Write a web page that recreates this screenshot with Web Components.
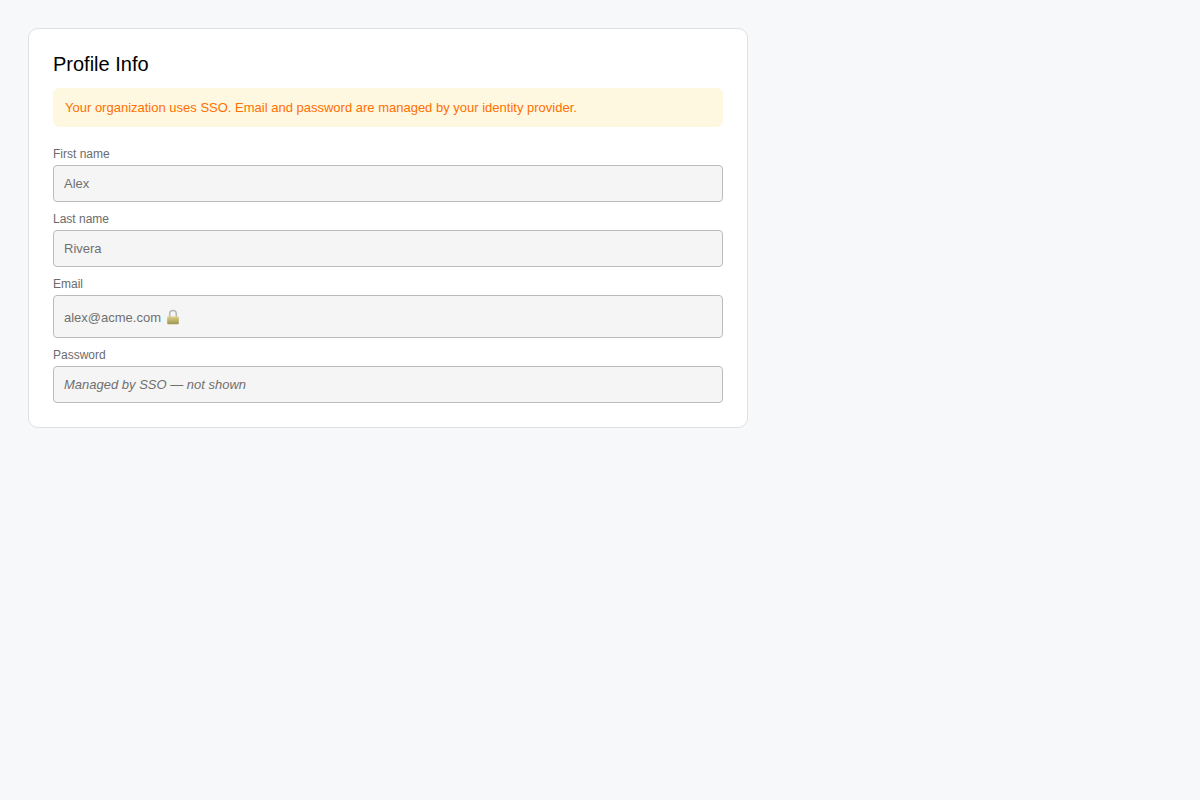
<!DOCTYPE html>
<html>
<head>
<meta charset="utf-8">
<title>Profile Info</title>
<style>
  html, body {
    margin: 0;
    height: 100%;
    background: #f7f8fa;
    font-family: "Liberation Sans", Arial, sans-serif;
  }
  body {
    padding: 28px;
    box-sizing: border-box;
  }
</style>
</head>
<body>
<template id="profile-card">
  <style>
    :host {
      display: block;
      box-sizing: border-box;
      width: 720px;
      padding: 24px;
      background: #fff;
      border: 1px solid #e0e0e0;
      border-radius: 10px;
    }
    h2 {
      margin: 0 0 12px;
      font-size: 20px;
      font-weight: 400;
      line-height: 23px;
      color: #000;
    }
    .fields {
      display: flex;
      flex-direction: column;
      gap: 10px;
    }
  </style>
  <h2 id="title"></h2>
  <slot name="notice"></slot>
  <div class="fields"><slot></slot></div>
</template>

<template id="sso-notice">
  <style>
    :host {
      display: block;
      margin-bottom: 20px;
      padding: 12px;
      background: #fff8e1;
      border-radius: 6px;
      color: #ff6f00;
      font-size: 13px;
      line-height: 15px;
    }
  </style>
  <slot></slot>
</template>

<template id="form-field">
  <style>
    :host {
      display: flex;
      flex-direction: column;
      gap: 4px;
    }
    label {
      font-size: 12px;
      line-height: 14px;
      color: #6b6b6b;
    }
    .value {
      display: flex;
      align-items: center;
      gap: 5px;
      padding: 10px;
      background: #f5f5f5;
      border: 1px solid #bbb;
      border-radius: 4px;
      font-size: 13px;
      line-height: 15px;
      color: #707070;
    }
    :host([muted]) .value {
      font-style: italic;
    }
    ::slotted(svg) {
      display: block;
    }
    ::slotted(span) {
      padding-top: 2px;
    }
  </style>
  <label id="label"></label>
  <div class="value"><slot></slot></div>
</template>

<profile-card heading="Profile Info">
  <sso-notice slot="notice">Your organization uses SSO. Email and password are managed by your identity provider.</sso-notice>
  <form-field label="First name">Alex</form-field>
  <form-field label="Last name">Rivera</form-field>
  <form-field label="Email"><span>alex@acme.com</span>
    <svg width="14" height="21" viewBox="0 0 14 21" aria-hidden="true">
      <defs>
        <linearGradient id="lock-body" x1="0" y1="0" x2="0" y2="1">
          <stop offset="0" stop-color="#e0d28a"/>
          <stop offset="1" stop-color="#9c9350"/>
        </linearGradient>
      </defs>
      <path d="M3.7 11V7.9a3.3 3.3 0 0 1 6.6 0V11" fill="none" stroke="#b4b7b8" stroke-width="1.5"/>
      <rect x="1.2" y="10.4" width="11.6" height="7.9" rx="1" fill="url(#lock-body)"/>
    </svg>
  </form-field>
  <form-field label="Password" muted>Managed by SSO — not shown</form-field>
</profile-card>

<script>
class ProfileCard extends HTMLElement {
  constructor() {
    super();
    const shadowRoot = this.attachShadow({ mode: 'open' });
    shadowRoot.appendChild(document.querySelector('template#profile-card').content.cloneNode(true));
    shadowRoot.querySelector('#title').textContent = this.getAttribute('heading');
  }
}

class SsoNotice extends HTMLElement {
  constructor() {
    super();
    const shadowRoot = this.attachShadow({ mode: 'open' });
    shadowRoot.appendChild(document.querySelector('template#sso-notice').content.cloneNode(true));
  }
}

class FormField extends HTMLElement {
  constructor() {
    super();
    const shadowRoot = this.attachShadow({ mode: 'open' });
    shadowRoot.appendChild(document.querySelector('template#form-field').content.cloneNode(true));
    shadowRoot.querySelector('#label').textContent = this.getAttribute('label');
  }
}

window.customElements.define('profile-card', ProfileCard);
window.customElements.define('sso-notice', SsoNotice);
window.customElements.define('form-field', FormField);
</script>
</body>
</html>
